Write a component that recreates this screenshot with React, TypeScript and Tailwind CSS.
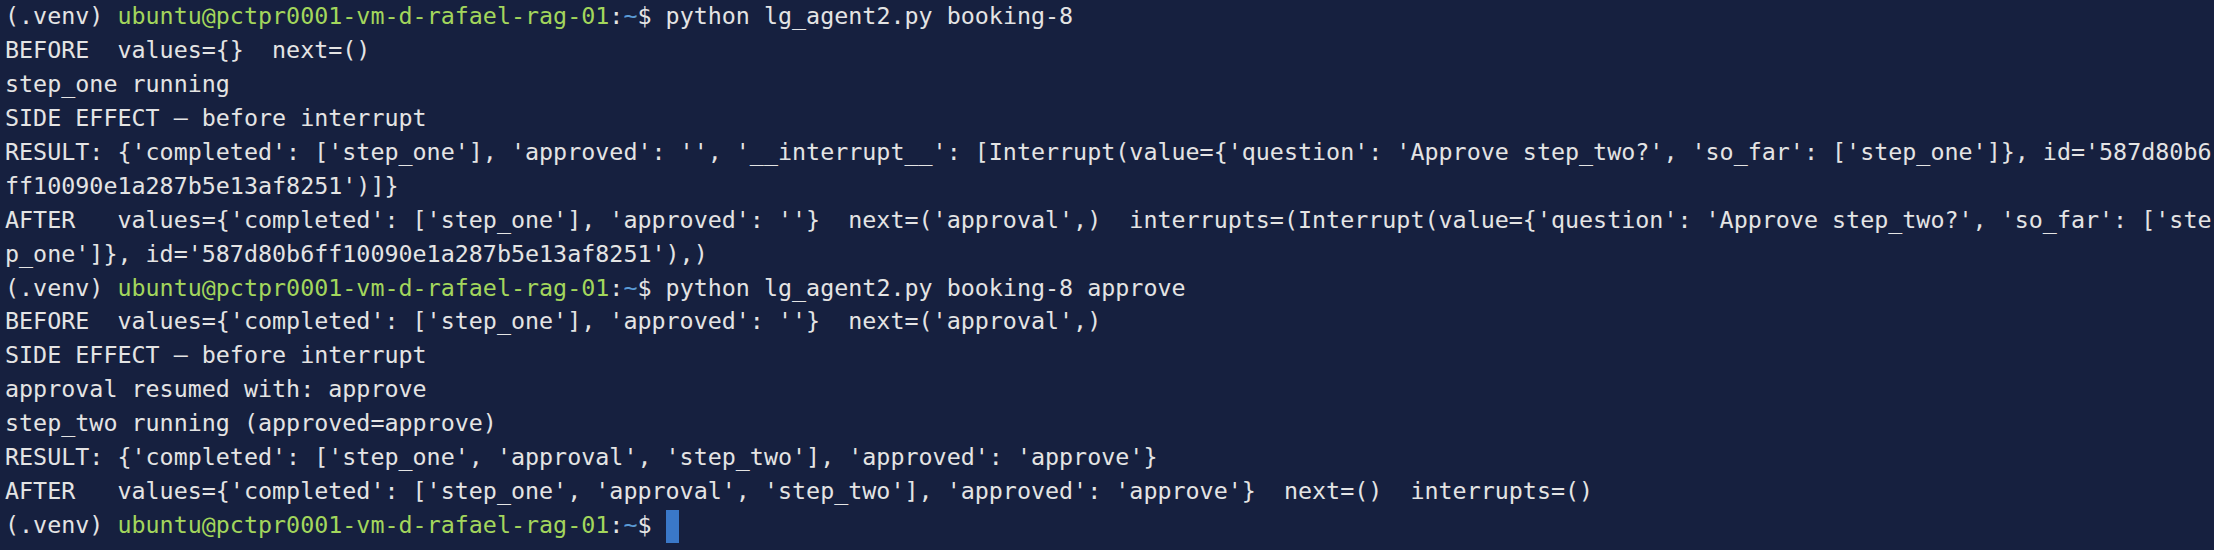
const Prompt = ({ cmd }: { cmd?: string }) => (
  <div>
    (.venv) <span className="text-[#a3d65c]">ubuntu@pctpr0001-vm-d-rafael-rag-01</span>:
    <span className="text-[#5b9bd5]">~</span>$ {cmd}
  </div>
);

const lines1 = [
  "BEFORE  values={}  next=()",
  "step_one running",
  "SIDE EFFECT – before interrupt",
  "RESULT: {'completed': ['step_one'], 'approved': '', '__interrupt__': [Interrupt(value={'question': 'Approve step_two?', 'so_far': ['step_one']}, id='587d80b6",
  "ff10090e1a287b5e13af8251')]}",
  "AFTER   values={'completed': ['step_one'], 'approved': ''}  next=('approval',)  interrupts=(Interrupt(value={'question': 'Approve step_two?', 'so_far': ['ste",
  "p_one']}, id='587d80b6ff10090e1a287b5e13af8251'),)",
];

const lines2 = [
  "BEFORE  values={'completed': ['step_one'], 'approved': ''}  next=('approval',)",
  "SIDE EFFECT – before interrupt",
  "approval resumed with: approve",
  "step_two running (approved=approve)",
  "RESULT: {'completed': ['step_one', 'approval', 'step_two'], 'approved': 'approve'}",
  "AFTER   values={'completed': ['step_one', 'approval', 'step_two'], 'approved': 'approve'}  next=()  interrupts=()",
];

export default function App() {
  return (
    <div className="w-[2214px] h-[550px] overflow-hidden bg-[#16203f] text-[#e4e4e4] font-['DejaVu_Sans_Mono',monospace] text-[23.35px] leading-[33.93px] whitespace-pre pl-[5px]">
      <Prompt cmd="python lg_agent2.py booking-8" />
      {lines1.map((l, i) => (
        <div key={i}>{l}</div>
      ))}
      <Prompt cmd="python lg_agent2.py booking-8 approve" />
      {lines2.map((l, i) => (
        <div key={i}>{l}</div>
      ))}
      <div className="flex items-center">
        <Prompt />
        <span className="inline-block w-[13px] h-[33px] bg-[#3a78c8]" />
      </div>
    </div>
  );
}
